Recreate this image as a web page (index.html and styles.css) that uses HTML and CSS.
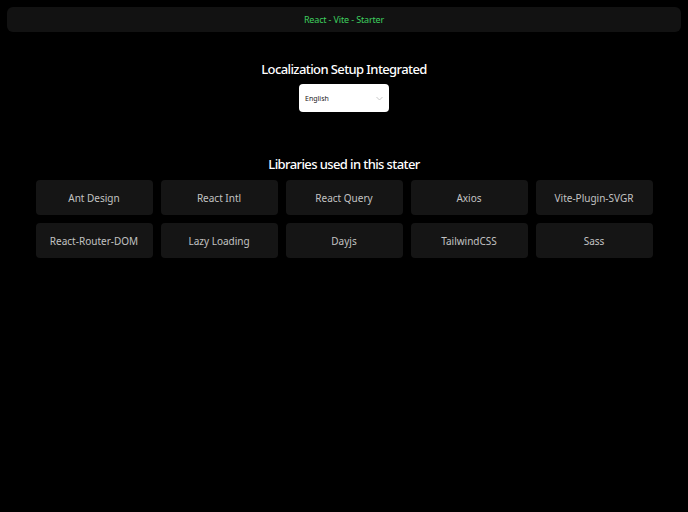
FILE: index.html
```html
<!DOCTYPE html>
<html>
<head>
<meta charset="utf-8">
<link rel="stylesheet" href="styles.css">
</head>
<body>
<header class="topbar"><span class="brand">React - Vite - Starter</span></header>
<main class="content">
  <h1 class="title">Localization Setup Integrated</h1>
  <div class="select">
    <span class="select-value">English</span>
    <svg class="chev" width="7" height="5" viewBox="0 0 7 5"><path d="M0.5 1 L3.5 4 L6.5 1" fill="none" stroke="#bbb" stroke-width="0.8"/></svg>
  </div>
  <h2 class="subtitle">Libraries used in this stater</h2>
  <div class="grid">
    <div class="card">Ant Design</div>
    <div class="card">React Intl</div>
    <div class="card">React Query</div>
    <div class="card">Axios</div>
    <div class="card">Vite-Plugin-SVGR</div>
    <div class="card">React-Router-DOM</div>
    <div class="card">Lazy Loading</div>
    <div class="card">Dayjs</div>
    <div class="card">TailwindCSS</div>
    <div class="card">Sass</div>
  </div>
</main>
</body>
</html>
```
FILE: styles.css
```css
html, body {
  margin: 0;
  padding: 0;
  background: #000;
  font-family: "Noto Sans", "DejaVu Sans", sans-serif;
}
body {
  padding: 7px;
}
.topbar {
  height: 25px;
  background: #121212;
  border-radius: 6px;
  display: flex;
  align-items: center;
  justify-content: center;
}
.brand {
  color: #3ecf5f;
  font-size: 9px;
  letter-spacing: -0.15px;
}
.content {
  display: flex;
  flex-direction: column;
  align-items: center;
}
.title {
  margin: 27px 0 0;
  color: #fff;
  font-size: 13px;
  font-weight: 500;
  line-height: 20px;
  letter-spacing: -0.6px;
}
.select {
  margin-top: 5px;
  width: 90px;
  height: 28px;
  background: #fff;
  border-radius: 4px;
  box-sizing: border-box;
  padding: 0 6px;
  display: flex;
  align-items: center;
  justify-content: space-between;
}
.select-value {
  color: #1a1a1a;
  font-size: 7px;
}
.subtitle {
  margin: 42px 0 0;
  color: #fff;
  font-size: 13px;
  font-weight: 500;
  line-height: 20px;
  letter-spacing: -0.6px;
}
.grid {
  margin-top: 6px;
  display: grid;
  grid-template-columns: repeat(5, 117px);
  gap: 8px;
}
.card {
  height: 35px;
  background: #151515;
  border-radius: 4px;
  display: flex;
  align-items: center;
  justify-content: center;
  color: #c2c2c2;
  font-size: 10px;
}
```
